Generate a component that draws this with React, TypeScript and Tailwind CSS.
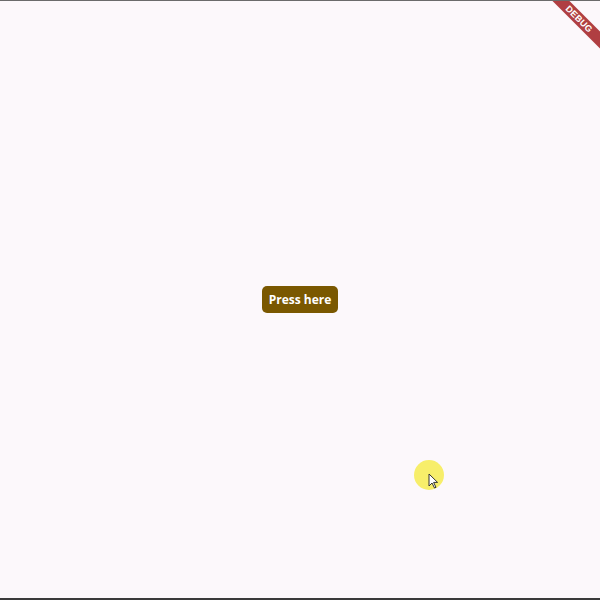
import React from "react";

const App = () => {
  return (
    <div className="relative w-[600px] h-[600px] overflow-hidden bg-[#fcf8fb] border-t border-[#6b6b6b] border-b-2 border-b-[#3a3a3a]">
      <div className="flex h-full items-center justify-center">
        <button
          className="h-[27px] w-[76px] rounded-[5px] bg-[#7a5800] pt-[1px] text-[12px] font-bold text-white"
          style={{ fontFamily: '"Open Sans", "Liberation Sans", sans-serif' }}
        >
          Press here
        </button>
      </div>

      {/* debug ribbon */}
      <div className="absolute top-[12px] right-[-22px] w-[86px] rotate-45 bg-[#b03f42] text-center text-[9px] font-bold leading-[12px] tracking-wide text-white"
        style={{ fontFamily: '"Liberation Sans", sans-serif' }}>
        DEBUG
      </div>

      {/* cursor highlight */}
      <div className="absolute left-[414px] top-[459px] h-[30px] w-[30px] rounded-full bg-[#f7ee6a]" />
      <svg className="absolute left-[428px] top-[472px]" width="11" height="16" viewBox="0 0 11 16">
        <path d="M1 1 L1 13 L4 10 L6.5 15 L8 14.3 L5.6 9.4 L9.6 9.4 Z" fill="#fff" stroke="#333" strokeWidth="1" strokeLinejoin="round" />
      </svg>
    </div>
  );
};

export default App;
